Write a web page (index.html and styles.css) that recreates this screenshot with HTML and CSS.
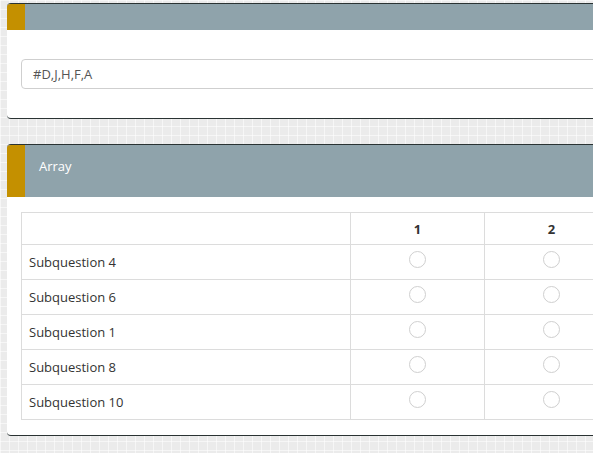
FILE: index.html
```html
<!DOCTYPE html>
<html>
<head>
<meta charset="utf-8">
<link rel="stylesheet" href="styles.css">
</head>
<body>
<div class="page">
  <section class="card">
    <div class="card-head card-head-short"><span class="strip"></span></div>
    <div class="card-body card-body-input">
      <div class="text-input">#D,J,H,F,A</div>
    </div>
  </section>
  <section class="card">
    <div class="card-head card-head-tall"><span class="strip"></span><span class="title">Array</span></div>
    <div class="card-body card-body-table">
      <table class="array">
        <colgroup><col class="c-label"><col class="c-opt"><col class="c-opt"></colgroup>
        <thead>
          <tr><th></th><th>1</th><th>2</th></tr>
        </thead>
        <tbody>
          <tr><td class="label">Subquestion 4</td><td><span class="radio"></span></td><td><span class="radio"></span></td></tr>
          <tr><td class="label">Subquestion 6</td><td><span class="radio"></span></td><td><span class="radio"></span></td></tr>
          <tr><td class="label">Subquestion 1</td><td><span class="radio"></span></td><td><span class="radio"></span></td></tr>
          <tr><td class="label">Subquestion 8</td><td><span class="radio"></span></td><td><span class="radio"></span></td></tr>
          <tr><td class="label">Subquestion 10</td><td><span class="radio"></span></td><td><span class="radio"></span></td></tr>
        </tbody>
      </table>
    </div>
  </section>
</div>
</body>
</html>
```
FILE: styles.css
```css
html, body {
  margin: 0;
  padding: 0;
  overflow: hidden;
  width: 593px;
  height: 453px;
}
body {
  background-color: #ebebeb;
  background-image:
    linear-gradient(to right, rgba(255,255,255,0.55) 1px, transparent 1px),
    linear-gradient(to bottom, rgba(255,255,255,0.55) 1px, transparent 1px);
  background-size: 9px 9px;
  font-family: "Open Sans", "Liberation Sans", sans-serif;
  font-size: 13px;
  color: #333;
}
.page {
  padding: 3px 0 0 7px;
  display: flex;
  flex-direction: column;
  gap: 25px;
  width: 640px;
}
.card {
  background: #fff;
  border-top: 1px solid #2a3333;
  border-bottom: 1px solid #2a3333;
  border-radius: 4px;
  overflow: hidden;
  width: 640px;
}
.card-head {
  background: #8fa3ab;
  display: flex;
  align-items: center;
  color: #fff;
}
.card-head-short { height: 26px; }
.card-head-tall { height: 52px; }
.strip {
  align-self: stretch;
  width: 18px;
  background: #c49000;
  flex: none;
}
.title {
  padding-left: 14px;
  font-size: 13px;
  margin-top: -10px;
}
.card-body-input {
  padding: 29px 0 29px 14px;
}
.text-input {
  height: 28px;
  border: 1px solid #cfcfcf;
  border-radius: 4px;
  box-sizing: content-box;
  display: flex;
  align-items: center;
  padding-left: 11px;
  color: #555;
  font-size: 13px;
}
.card-body-table {
  padding: 15px 0 15px 14px;
}
.array {
  border-collapse: collapse;
  table-layout: fixed;
  width: 597px;
}
.c-label { width: 329px; }
.c-opt { width: 134px; }
.array th, .array td {
  border: 1px solid #dcdcdc;
  padding: 0;
  text-align: center;
  vertical-align: middle;
}
.array th {
  height: 31px;
  font-weight: bold;
  font-size: 13px;
  color: #333;
}
.array td {
  height: 34px;
}
.array td.label {
  text-align: left;
  padding-left: 7px;
}
.radio {
  display: inline-block;
  width: 15px;
  height: 15px;
  border: 1px solid #cfcfcf;
  border-radius: 50%;
  vertical-align: middle;
  position: relative;
  top: -4px;
}
```
